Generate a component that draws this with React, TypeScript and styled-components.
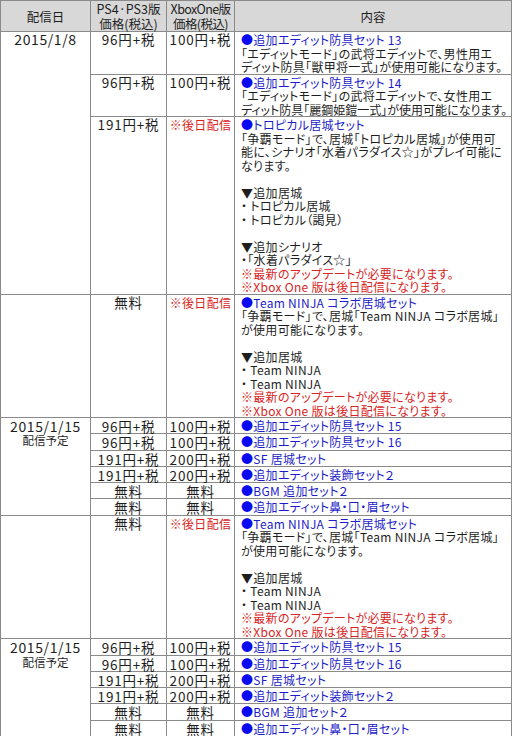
import React from 'react'
import styled, { createGlobalStyle } from 'styled-components'

const GlobalStyle = createGlobalStyle`
  html, body {
    margin: 0;
    padding: 0;
    background: #ffffff;
  }
  body {
    font-family: "Noto Sans CJK JP", "Noto Sans", sans-serif;
    color: #1e1e1e;
  }
`

const colors = {
  border: '#8a8a8a',
  head: '#d8d8d8',
  blue: '#1c1cc8',
  red: '#d82424',
  text: '#1e1e1e',
}

const LINE = 13.5

const Table = styled.table`
  width: 511px;
  table-layout: fixed;
  border-collapse: collapse;
  font-size: 12px;
  font-feature-settings: 'palt';
  line-height: ${LINE}px;
`

const HeadCell = styled.th<{ $condensed?: boolean }>`
  height: 30px;
  padding: 0;
  background: ${colors.head};
  border: 1px solid ${colors.border};
  font-weight: 400;
  font-size: 12.5px;
  line-height: 15px;
  text-align: center;
  vertical-align: middle;
  letter-spacing: ${(p) => (p.$condensed ? '-0.6px' : '0')};
`

const Row = styled.tr<{ $single?: boolean }>`
  td {
    line-height: ${(p) => (p.$single ? '14.3px' : `${LINE}px`)};
  }
`

const DateCell = styled.td`
  padding: 1px 0 0;
  border: 1px solid ${colors.border};
  vertical-align: top;
  text-align: center;
  font-size: 14px;
  letter-spacing: 0.6px;
`

const DateSub = styled.div`
  font-size: 11.5px;
  line-height: 14px;
  letter-spacing: 0;
`

const PriceCell = styled.td<{ $red?: boolean }>`
  padding: 1px 0 0;
  border: 1px solid ${colors.border};
  vertical-align: top;
  text-align: center;
  white-space: nowrap;
  color: ${(p) => (p.$red ? colors.red : colors.text)};
  font-size: ${(p) => (p.$red ? '12px' : '13.5px')};
  letter-spacing: ${(p) => (p.$red ? '0.3px' : '0.8px')};
`

const ContentCell = styled.td`
  padding: 1px 0 0 6px;
  border: 1px solid ${colors.border};
  vertical-align: top;
  text-align: left;
  white-space: nowrap;
  letter-spacing: 0.3px;
`

const Title = styled.div`
  color: ${colors.blue};
  &::before {
    content: '●';
    color: #0a0af0;
  }
`

const Line = styled.div<{ $tight?: boolean }>`
  letter-spacing: ${(p) => (p.$tight ? '0' : 'inherit')};
`

const Note = styled.div`
  color: ${colors.red};
`

const Blank = styled.div`
  height: ${LINE}px;
`

function NinjaRow() {
  return (
    <Row>
      <DateCell />
      <PriceCell>無料</PriceCell>
      <PriceCell $red>※後日配信</PriceCell>
      <ContentCell>
        <Title>Team NINJA コラボ居城セット</Title>
        <Line>「争覇モード」で、居城「Team NINJA コラボ居城」</Line>
        <Line>が使用可能になります。</Line>
        <Blank />
        <Line>▼追加居城</Line>
        <Line>・ Team NINJA</Line>
        <Line>・ Team NINJA</Line>
        <Note>※最新のアップデートが必要になります。</Note>
        <Note>※Xbox One 版は後日配信になります。</Note>
      </ContentCell>
    </Row>
  )
}

const singleItems = [
  { ps: '96円+税', xb: '100円+税', title: '追加エディット防具セット 15' },
  { ps: '96円+税', xb: '100円+税', title: '追加エディット防具セット 16' },
  { ps: '191円+税', xb: '200円+税', title: 'SF 居城セット' },
  { ps: '191円+税', xb: '200円+税', title: '追加エディット装飾セット２' },
  { ps: '無料', xb: '無料', title: 'BGM 追加セット２' },
  { ps: '無料', xb: '無料', title: '追加エディット鼻・口・眉セット' },
]

function JanuaryFifteen() {
  return (
    <>
      {singleItems.map((item, i) => (
        <Row $single key={item.title}>
          {i === 0 && (
            <DateCell rowSpan={singleItems.length}>
              2015/1/15
              <DateSub>配信予定</DateSub>
            </DateCell>
          )}
          <PriceCell>{item.ps}</PriceCell>
          <PriceCell>{item.xb}</PriceCell>
          <ContentCell>
            <Title>{item.title}</Title>
          </ContentCell>
        </Row>
      ))}
    </>
  )
}

export default function App() {
  return (
    <>
      <GlobalStyle />
      <Table>
        <colgroup>
          <col style={{ width: 90 }} />
          <col style={{ width: 76 }} />
          <col style={{ width: 68 }} />
          <col style={{ width: 277 }} />
        </colgroup>
        <thead>
          <tr>
            <HeadCell>配信日</HeadCell>
            <HeadCell>
              PS4·PS3版
              <br />
              価格(税込)
            </HeadCell>
            <HeadCell $condensed>
              XboxOne版
              <br />
              価格(税込)
            </HeadCell>
            <HeadCell>内容</HeadCell>
          </tr>
        </thead>
        <tbody>
          <Row>
            <DateCell rowSpan={3}>2015/1/8</DateCell>
            <PriceCell>96円+税</PriceCell>
            <PriceCell>100円+税</PriceCell>
            <ContentCell>
              <Title>追加エディット防具セット 13</Title>
              <Line>「エディットモード」の武将エディットで、男性用エ</Line>
              <Line>ディット防具「獣甲将一式」が使用可能になります。</Line>
            </ContentCell>
          </Row>
          <Row>
            <PriceCell>96円+税</PriceCell>
            <PriceCell>100円+税</PriceCell>
            <ContentCell>
              <Title>追加エディット防具セット 14</Title>
              <Line>「エディットモード」の武将エディットで、女性用エ</Line>
              <Line $tight>ディット防具「麗鋼姫鎧一式」が使用可能になります。</Line>
            </ContentCell>
          </Row>
          <Row>
            <PriceCell>191円+税</PriceCell>
            <PriceCell $red>※後日配信</PriceCell>
            <ContentCell>
              <Title>トロピカル居城セット</Title>
              <Line>「争覇モード」で、居城「トロピカル居城」が使用可</Line>
              <Line>能に、シナリオ「水着パラダイス☆」がプレイ可能に</Line>
              <Line>なります。</Line>
              <Blank />
              <Line>▼追加居城</Line>
              <Line>・ トロピカル居城</Line>
              <Line>・ トロピカル（謁見）</Line>
              <Blank />
              <Line>▼追加シナリオ</Line>
              <Line>・「水着パラダイス☆」</Line>
              <Note>※最新のアップデートが必要になります。</Note>
              <Note>※Xbox One 版は後日配信になります。</Note>
            </ContentCell>
          </Row>
          <NinjaRow />
          <JanuaryFifteen />
          <NinjaRow />
          <JanuaryFifteen />
        </tbody>
      </Table>
    </>
  )
}
